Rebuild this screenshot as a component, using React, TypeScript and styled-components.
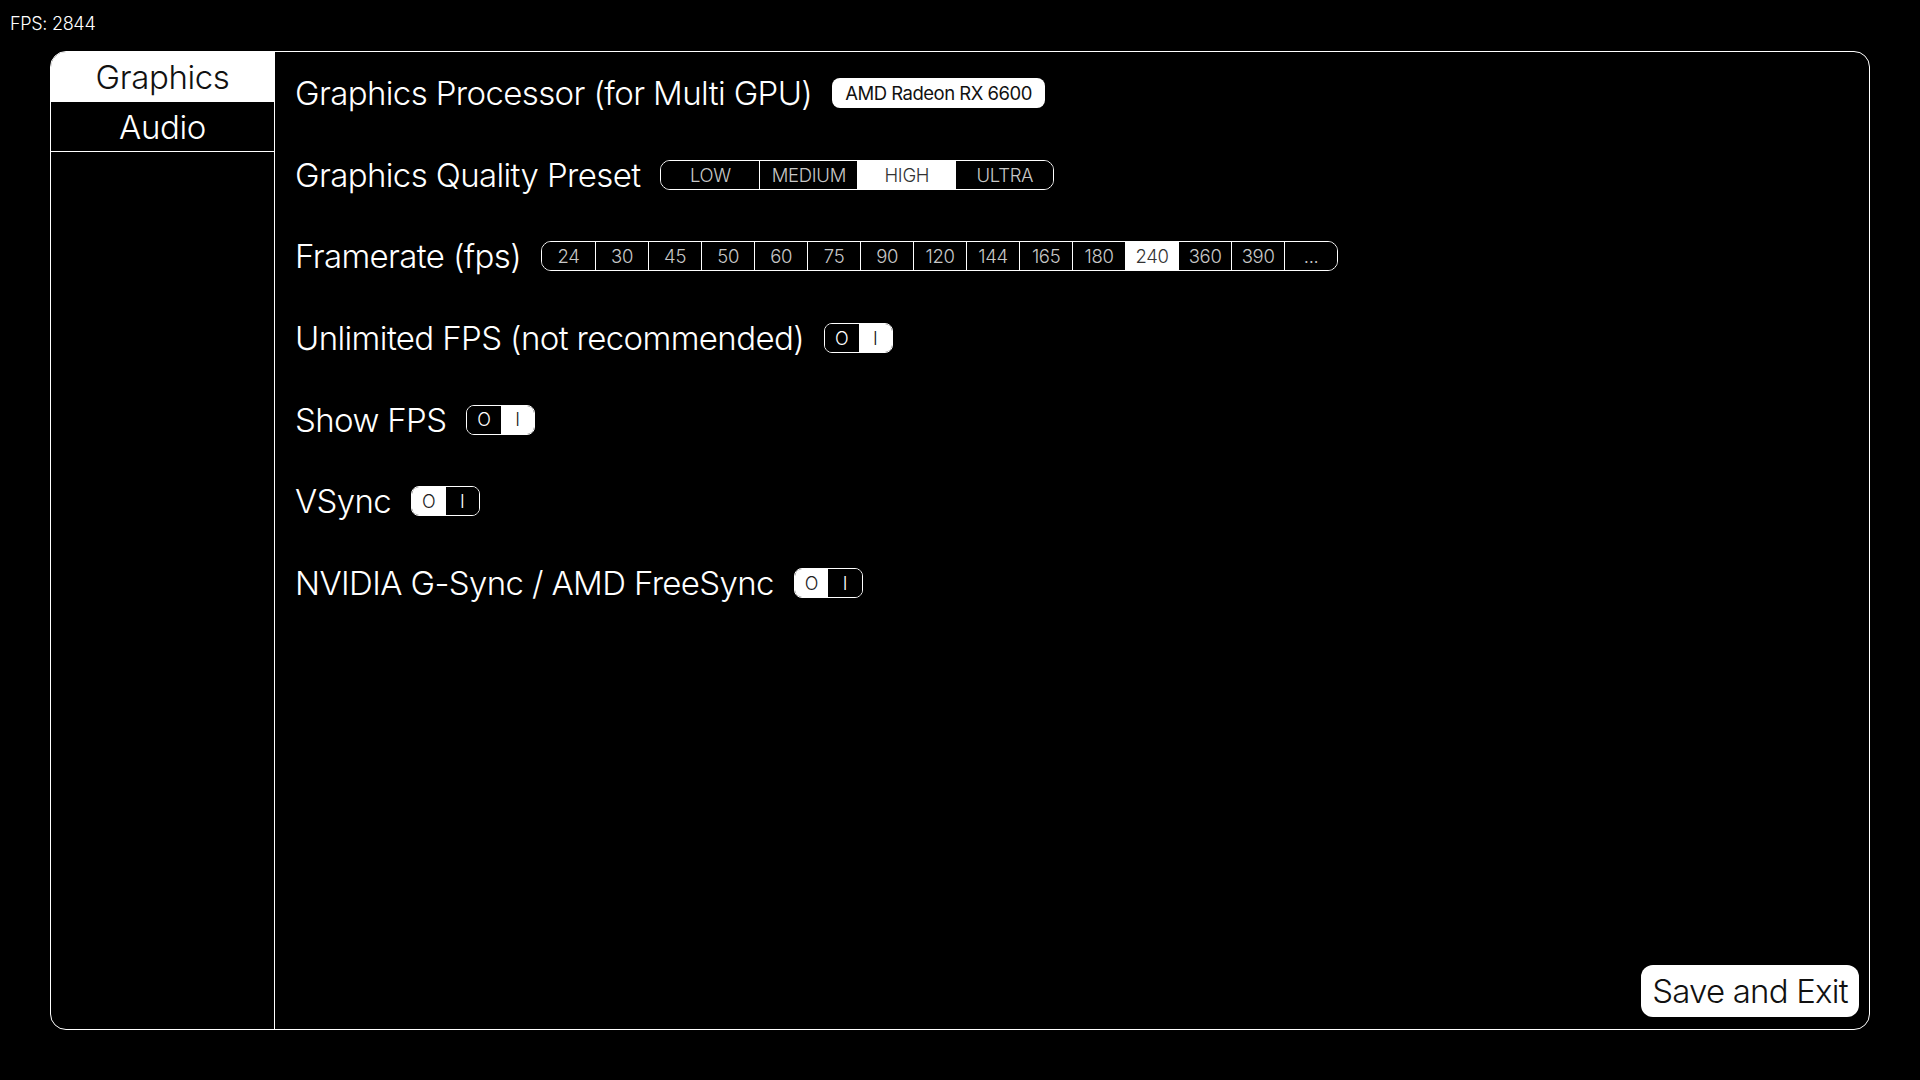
import React, { useState } from "react";
import styled, { createGlobalStyle } from "styled-components";

const GlobalStyle = createGlobalStyle`
  html, body {
    margin: 0;
    padding: 0;
    background: #000;
    color: #fff;
    font-family: Inter, "Noto Sans", sans-serif;
  }
  * { box-sizing: border-box; }
`;

const Page = styled.div`
  position: relative;
  width: 1920px;
  height: 1080px;
  padding: 51px 50px 50px 50px;
  background: #000;
  display: flex;
`;

const FpsCounter = styled.div`
  position: absolute;
  left: 10px;
  top: 13px;
  font-size: 18px;
  font-weight: 300;
  letter-spacing: -0.3px;
  color: #fff;
`;

const Panel = styled.div`
  flex: 1;
  display: flex;
  border: 1px solid #fff;
  border-radius: 16px;
  overflow: hidden;
`;

const Sidebar = styled.nav`
  width: 224px;
  flex-shrink: 0;
  border-right: 1px solid #fff;
  display: flex;
  flex-direction: column;
`;

const Tab = styled.button<{ $active?: boolean }>`
  height: 50px;
  border: none;
  border-bottom: ${(p) => (p.$active ? "none" : "1px solid #fff")};
  background: ${(p) => (p.$active ? "#fff" : "#000")};
  color: ${(p) => (p.$active ? "#111" : "#fff")};
  font-family: Inter, sans-serif;
  font-size: 33px;
  font-weight: 300;
  letter-spacing: -0.4px;
  padding: 0;
  cursor: pointer;
  display: flex;
  align-items: center;
  justify-content: center;
`;

const Content = styled.section`
  flex: 1;
  display: flex;
  flex-direction: column;
  padding: 20px 10px 12px 20px;
`;

const Rows = styled.div`
  display: flex;
  flex-direction: column;
  gap: 39.7px;
`;

const Row = styled.div`
  display: flex;
  align-items: center;
  gap: 20px;
  height: 42px;
`;

const Label = styled.span`
  font-size: 33px;
  font-weight: 300;
  letter-spacing: -0.62px;
  color: #fff;
  white-space: nowrap;
`;

const Badge = styled.span`
  height: 30px;
  padding: 0 13px;
  display: inline-flex;
  align-items: center;
  background: #fff;
  color: #111;
  border-radius: 8px;
  font-size: 18.5px;
  font-weight: 400;
  letter-spacing: -0.5px;
`;

const Segmented = styled.div`
  display: flex;
  height: 30px;
  border: 1px solid #fff;
  border-radius: 10px;
  overflow: hidden;
`;

const Segment = styled.button<{ $active?: boolean; $w: number }>`
  width: ${(p) => p.$w}px;
  height: 100%;
  border: none;
  border-left: 1px solid #fff;
  &:first-child { border-left: none; }
  background: ${(p) => (p.$active ? "#fff" : "#000")};
  color: ${(p) => (p.$active ? "#333" : "#c8c8c8")};
  font-family: Inter, sans-serif;
  font-size: 18.5px;
  font-weight: 300;
  letter-spacing: -0.3px;
  padding: 0;
  display: flex;
  align-items: center;
  justify-content: center;
  cursor: pointer;
`;

const Toggle = styled.div`
  display: flex;
  width: 69px;
  height: 30px;
  border: 1px solid #fff;
  border-radius: 8px;
  overflow: hidden;
`;

const ToggleHalf = styled.span<{ $active?: boolean }>`
  flex: 1;
  display: flex;
  align-items: center;
  justify-content: center;
  background: ${(p) => (p.$active ? "#fff" : "#000")};
  color: ${(p) => (p.$active ? "#222" : "#fff")};
  font-size: 18px;
  font-weight: 300;
`;

const Footer = styled.div`
  margin-top: auto;
  display: flex;
  justify-content: flex-end;
`;

const SaveButton = styled.button`
  width: 218px;
  height: 52px;
  border: none;
  border-radius: 12px;
  background: #fff;
  color: #111;
  font-family: Inter, sans-serif;
  font-size: 33px;
  font-weight: 300;
  letter-spacing: -0.8px;
  padding: 0;
  cursor: pointer;
`;

const presets = ["LOW", "MEDIUM", "HIGH", "ULTRA"];
const rates = ["24", "30", "45", "50", "60", "75", "90", "120", "144", "165", "180", "240", "360", "390", "..."];

function Switch({ on }: { on: boolean }) {
  return (
    <Toggle>
      <ToggleHalf $active={!on}>O</ToggleHalf>
      <ToggleHalf $active={on}>I</ToggleHalf>
    </Toggle>
  );
}

export default function App() {
  const [tab, setTab] = useState("Graphics");
  return (
    <>
      <GlobalStyle />
      <Page>
        <FpsCounter>FPS: 2844</FpsCounter>
        <Panel>
          <Sidebar>
            {["Graphics", "Audio"].map((t) => (
              <Tab key={t} $active={tab === t} onClick={() => setTab(t)}>
                {t}
              </Tab>
            ))}
          </Sidebar>
          <Content>
            <Rows>
              <Row>
                <Label>Graphics Processor (for Multi GPU)</Label>
                <Badge>AMD Radeon RX 6600</Badge>
              </Row>
              <Row>
                <Label>Graphics Quality Preset</Label>
                <Segmented>
                  {presets.map((p) => (
                    <Segment key={p} $w={98} $active={p === "HIGH"}>
                      {p}
                    </Segment>
                  ))}
                </Segmented>
              </Row>
              <Row>
                <Label>Framerate (fps)</Label>
                <Segmented>
                  {rates.map((r) => (
                    <Segment key={r} $w={53} $active={r === "240"}>
                      {r}
                    </Segment>
                  ))}
                </Segmented>
              </Row>
              <Row>
                <Label>Unlimited FPS (not recommended)</Label>
                <Switch on={true} />
              </Row>
              <Row>
                <Label>Show FPS</Label>
                <Switch on={true} />
              </Row>
              <Row>
                <Label>VSync</Label>
                <Switch on={false} />
              </Row>
              <Row>
                <Label>NVIDIA G-Sync / AMD FreeSync</Label>
                <Switch on={false} />
              </Row>
            </Rows>
            <Footer>
              <SaveButton>Save and Exit</SaveButton>
            </Footer>
          </Content>
        </Panel>
      </Page>
    </>
  );
}
